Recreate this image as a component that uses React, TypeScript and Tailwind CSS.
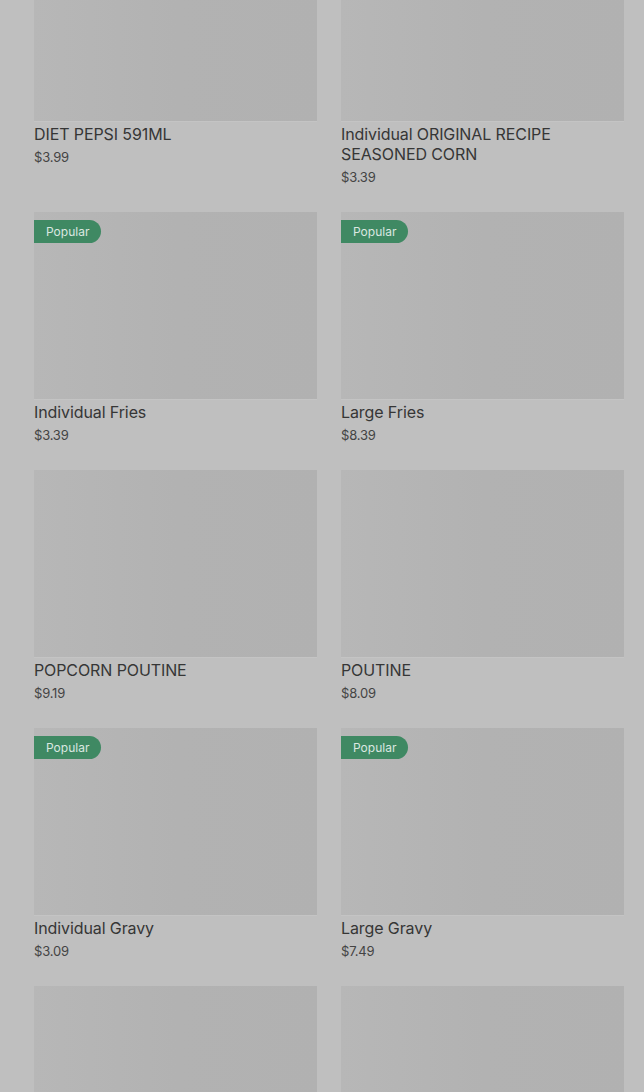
import React from "react";

type Item = { name: string; price: string; popular?: boolean };

const items: Item[] = [
  { name: "DIET PEPSI 591ML", price: "$3.99" },
  { name: "Individual ORIGINAL RECIPE SEASONED CORN", price: "$3.39" },
  { name: "Individual Fries", price: "$3.39", popular: true },
  { name: "Large Fries", price: "$8.39", popular: true },
  { name: "POPCORN POUTINE", price: "$9.19" },
  { name: "POUTINE", price: "$8.09" },
  { name: "Individual Gravy", price: "$3.09", popular: true },
  { name: "Large Gravy", price: "$7.49", popular: true },
  { name: "", price: "" },
  { name: "", price: "" },
];

function Card({ item }: { item: Item }) {
  return (
    <div className="flex flex-col">
      <div className="relative h-[188px] w-full bg-gradient-to-r from-[#b7b7b7] via-[#b2b2b2] to-[#b1b1b1] border-b border-[#c4c4c4]">
        {item.popular && (
          <div className="absolute left-0 top-[8px] h-[23px] pl-[12px] pr-[12px] flex items-center rounded-r-full bg-[#3f8963] text-[#dbe7e0] text-[12px] leading-none">
            Popular
          </div>
        )}
      </div>
      {item.name && (
        <div className="mt-[2px] text-[16px] leading-[20px] text-[#363636] font-normal pr-[40px] tracking-[-0.1px]">
          {item.name}
        </div>
      )}
      {item.price && (
        <div className="mt-[4px] text-[13px] leading-[18px] text-[#444444] tracking-[-0.2px]">{item.price}</div>
      )}
    </div>
  );
}

export default function App() {
  return (
    <div
      className="w-[644px] h-[1092px] overflow-hidden bg-[#bfbfbf]"
      style={{ fontFamily: "Inter, Roboto, 'Noto Sans', Arial, sans-serif" }}
    >
      <div className="mt-[-66px] pl-[34px] pr-[20px] grid grid-cols-2 gap-x-[24px] gap-y-[26px]">
        {items.map((it, i) => (
          <Card key={i} item={it} />
        ))}
      </div>
    </div>
  );
}
